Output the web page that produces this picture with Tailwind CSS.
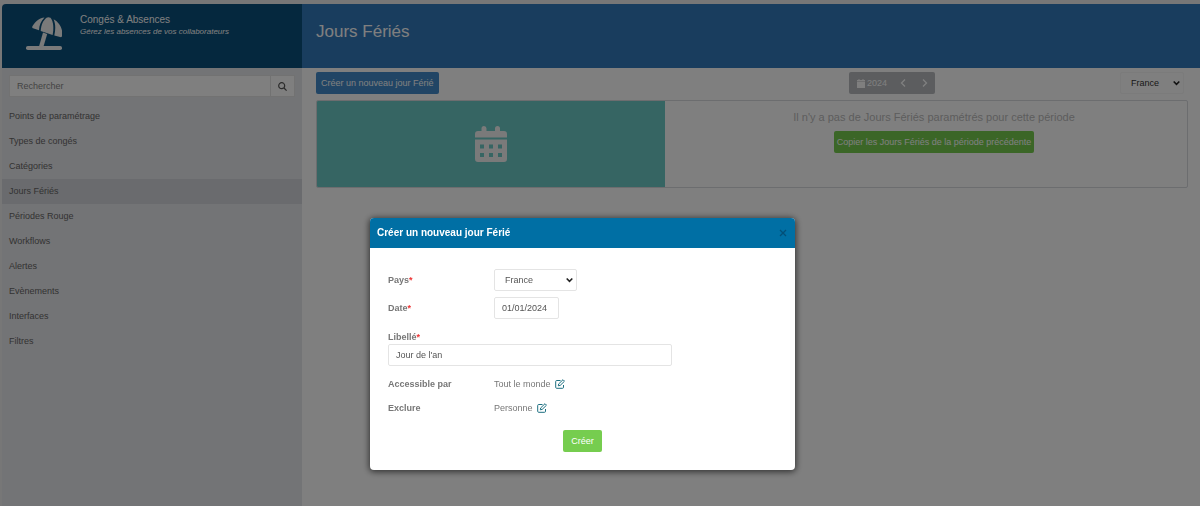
<!DOCTYPE html>
<html lang="fr">
<head>
    <meta charset="UTF-8" />
    <meta name="viewport" content="width=device-width, initial-scale=1.0" />
    <title>Congés &amp; Absences - Jours Fériés</title>
    <script src="https://cdn.jsdelivr.net/npm/@tailwindcss/browser@4"></script>
</head>
<body class="font-['Liberation_Sans',Arial,sans-serif] text-[9px] leading-3 text-[#666] bg-white">
    <div class="flex flex-col min-h-screen pt-1 bg-[#eee]">
        <div class="flex grow bg-white">
            <!-- Sidebar -->
            <aside class="w-[302px] shrink-0 bg-[#e6e8ec] border-l-2 border-[#eee]">
                <div class="flex h-16 rounded-tl-sm bg-[#0a507c] text-white">
                    <svg class="w-9 h-[34px] mt-3 ml-6 fill-[#f4f4f4]" viewBox="0 0 36 34" aria-hidden="true">
                        <rect x="0" y="30" width="36" height="4" rx="1.800" />
                        <path d="M17 16.500l4.200 1.400L17.500 30.500h-4.500z" />
                        <path d="M7 12.300c-.8-.4-1-1-.6-2C9.500 5 14 1.900 18.500 1.500 15 5 13.300 9 13 14.300z" />
                        <path d="M14.700 14.900C15 8.500 17.500 4 20.500 1.700c1.200-.8 2.600-.7 4 0C27.500 5.500 28 12 26.600 18.900z" />
                        <path d="M28.300 19.500C29.800 13 29.500 7.500 27.600 3.300 33.500 6.500 37 13 36.200 19.500c-.2 1.400-1 1.900-2.200 1.600z" />
                    </svg>
                    <div class="mt-2.5 ml-[18px]">
                        <p class="text-[10px]">Congés &amp; Absences</p>
                        <p class="text-[8px] italic">Gérez les absences de vos collaborateurs</p>
                    </div>
                </div>
                <form class="flex mt-[7px] mx-[7px] h-[22px]">
                    <input type="search" aria-label="Rechercher" placeholder="Rechercher" class="grow min-w-0 px-[7px] bg-white border border-[#e4e4e4] placeholder:text-[#888]" />
                    <button type="button" aria-label="Lancer la recherche" class="flex items-center justify-center w-6 bg-white border border-l-0 border-[#e4e4e4]">
                        <svg class="w-[9px] h-[9px]" viewBox="0 0 9 9" fill="none" stroke="#555" stroke-width="1.200"><circle cx="3.700" cy="3.700" r="3" /><path d="M6 6l2.600 2.600" /></svg>
                    </button>
                </form>
                <nav class="mt-[7px] flex flex-col">
                    <a href="#" class="h-[25px] px-[7px] py-1.5">Points de paramétrage</a>
                    <a href="#" class="h-[25px] px-[7px] py-1.5">Types de congés</a>
                    <a href="#" class="h-[25px] px-[7px] py-1.5">Catégories</a>
                    <a href="#" class="h-[25px] px-[7px] py-1.5 bg-[#d4d6dc]">Jours Fériés</a>
                    <a href="#" class="h-[25px] px-[7px] py-1.5">Périodes Rouge</a>
                    <a href="#" class="h-[25px] px-[7px] py-1.5">Workflows</a>
                    <a href="#" class="h-[25px] px-[7px] py-1.5">Alertes</a>
                    <a href="#" class="h-[25px] px-[7px] py-1.5">Evènements</a>
                    <a href="#" class="h-[25px] px-[7px] py-1.5">Interfaces</a>
                    <a href="#" class="h-[25px] px-[7px] py-1.5">Filtres</a>
                </nav>
            </aside>

            <!-- Main content -->
            <main class="grow min-w-0">
                <header class="flex items-center h-16 px-3.5 pb-2 bg-[#337abd]">
                    <h1 class="text-[17px] leading-5 text-white">Jours Fériés</h1>
                </header>
                <div class="flex items-center justify-between h-[22px] mt-1 pl-3.5 pr-4">
                    <button type="button" class="h-full px-[5px] rounded-xs bg-[#428bca] text-white whitespace-nowrap">Créer un nouveau jour Férié</button>
                    <div class="flex h-full ml-auto mr-[185px] rounded-xs bg-[#b8bbbf] text-white">
                        <button type="button" class="flex items-center gap-0.5 pl-2 pr-1">
                            <svg class="w-2 h-[9px]" viewBox="0 0 8 9" fill="#fff"><path d="M1.500 0h1v1h3V0h1v1H8v1.500H0V1h1.500zM0 3h8v6H0z" /></svg>
                            <span>2024</span>
                        </button>
                        <button type="button" aria-label="Année précédente" class="flex items-center justify-center w-6">
                            <svg class="w-1.5 h-2" viewBox="0 0 6 8" fill="none" stroke="#fff" stroke-width="1.300"><path d="M5 .5L1.500 4 5 7.500" /></svg>
                        </button>
                        <button type="button" aria-label="Année suivante" class="flex items-center justify-center w-5">
                            <svg class="w-1.5 h-2" viewBox="0 0 6 8" fill="none" stroke="#fff" stroke-width="1.300"><path d="M1 .5L4.500 4 1 7.500" /></svg>
                        </button>
                    </div>
                    <div class="relative h-full">
                        <select aria-label="Pays affiché" class="appearance-none h-full w-16 pl-2.5 rounded-xs border border-[#f6f6f6] bg-white text-[#333]"><option>France</option></select>
                        <svg class="absolute right-1 top-2 w-[7px] h-1.5 pointer-events-none" viewBox="0 0 7 6" fill="none" stroke="#222" stroke-width="1.600"><path d="M.7 1.500L3.500 4.300 6.300 1.500" /></svg>
                    </div>
                </div>
                <section class="flex h-[88px] mt-1.5 ml-3.5 mr-3 rounded-xs border border-[#d8dade] overflow-hidden">
                    <div class="flex items-center justify-center w-2/5 bg-[#6ccac6]">
                        <svg class="w-8 h-9" viewBox="0 0 32 36" fill="#f4f4f4" aria-hidden="true">
                            <path fill-rule="evenodd" d="M0 13.500h32V33a3 3 0 0 1-3 3H3a3 3 0 0 1-3-3zM5 18.500v4h4v-4zM14 18.500v4h4v-4zM23 18.500v4h4v-4zM5 27v4h4v-4zM14 27v4h4v-4zM23 27v4h4v-4z" />
                            <path d="M3 5h3.500V2.500a2.500 2.500 0 0 1 5 0V5H20V2.500a2.500 2.500 0 0 1 5 0V5h4a3 3 0 0 1 3 3v3.500H0V8a3 3 0 0 1 3-3z" />
                        </svg>
                    </div>
                    <div class="flex flex-col items-center grow pt-2.5 pl-4">
                        <p class="text-[11px] leading-3 text-[#bbb]">Il n'y a pas de Jours Fériés paramétrés pour cette période</p>
                        <button type="button" class="h-[22px] mt-2 px-[3px] rounded-xs bg-[#76cd4f] text-white">Copier les Jours Fériés de la période précédente</button>
                    </div>
                </section>
            </main>
        </div>
    </div>

    <!-- Modal -->
    <div class="fixed inset-0 bg-black/50">
        <div role="dialog" aria-modal="true" aria-labelledby="modal-title" class="absolute left-[370px] top-[218px] w-[425px] rounded bg-white text-[#777] shadow-[0_1px_6px_1px_rgba(0,0,0,0.6)] overflow-hidden">
            <div class="flex items-center justify-between h-[30px] px-[7px] bg-[#006fa4]">
                <h2 id="modal-title" class="text-[10px] font-bold text-white">Créer un nouveau jour Férié</h2>
                <button type="button" aria-label="Fermer">
                    <svg class="w-2.5 h-2.5" viewBox="0 0 10 10" fill="none" stroke="#034f77" stroke-width="1.300"><path d="M2 2l6 6M8 2L2 8" /></svg>
                </button>
            </div>
            <form class="px-[18px] pt-[21px] pb-[18px]">
                <div class="flex items-center h-[22px]">
                    <label for="pays" class="w-[106px] font-bold">Pays<span class="text-[#e33]">*</span></label>
                    <div class="relative h-full">
                        <select id="pays" class="appearance-none h-full w-[83px] pl-2.5 rounded-xs border border-[#e4e4e4] bg-white text-[#555]"><option>France</option></select>
                        <svg class="absolute right-1 top-2 w-[7px] h-1.5 pointer-events-none" viewBox="0 0 7 6" fill="none" stroke="#222" stroke-width="1.600"><path d="M.7 1.500L3.500 4.300 6.300 1.500" /></svg>
                    </div>
                </div>
                <div class="flex items-center h-[22px] mt-1.5">
                    <label for="date" class="w-[106px] font-bold">Date<span class="text-[#e33]">*</span></label>
                    <input id="date" type="text" value="01/01/2024" class="h-full w-[65px] px-[7px] rounded-xs border border-[#e4e4e4] text-[#555]" />
                </div>
                <div class="mt-3">
                    <label for="libelle" class="block font-bold">Libellé<span class="text-[#e33]">*</span></label>
                    <input id="libelle" type="text" value="Jour de l'an" class="block h-[22px] w-[284px] mt-px px-[7px] rounded-xs border border-[#e4e4e4] text-[#555]" />
                </div>
                <div class="flex items-center h-3 mt-3">
                    <span class="w-[106px] font-bold">Accessible par</span>
                    <span>Tout le monde</span>
                    <button type="button" aria-label="Modifier l'accès" class="ml-1">
                        <svg class="w-2.5 h-2.5" viewBox="0 0 10 10" fill="none" stroke="#1d6f80"><path d="M5.500 1.500H1.700a1 1 0 0 0-1 1v5.800a1 1 0 0 0 1 1h5.800a1 1 0 0 0 1-1V6" /><path d="M3.300 6.800l.4-1.900L8 .7l1.500 1.500-4.300 4.200z" /></svg>
                    </button>
                </div>
                <div class="flex items-center h-3 mt-3">
                    <span class="w-[106px] font-bold">Exclure</span>
                    <span>Personne</span>
                    <button type="button" aria-label="Modifier les exclusions" class="ml-1">
                        <svg class="w-2.5 h-2.5" viewBox="0 0 10 10" fill="none" stroke="#1d6f80"><path d="M5.500 1.500H1.700a1 1 0 0 0-1 1v5.800a1 1 0 0 0 1 1h5.800a1 1 0 0 0 1-1V6" /><path d="M3.300 6.800l.4-1.900L8 .7l1.500 1.500-4.300 4.200z" /></svg>
                    </button>
                </div>
                <div class="flex justify-center mt-4">
                    <button type="submit" class="h-[22px] px-2 rounded-xs bg-[#76cd4f] text-white">Créer</button>
                </div>
            </form>
        </div>
    </div>
</body>
</html>
